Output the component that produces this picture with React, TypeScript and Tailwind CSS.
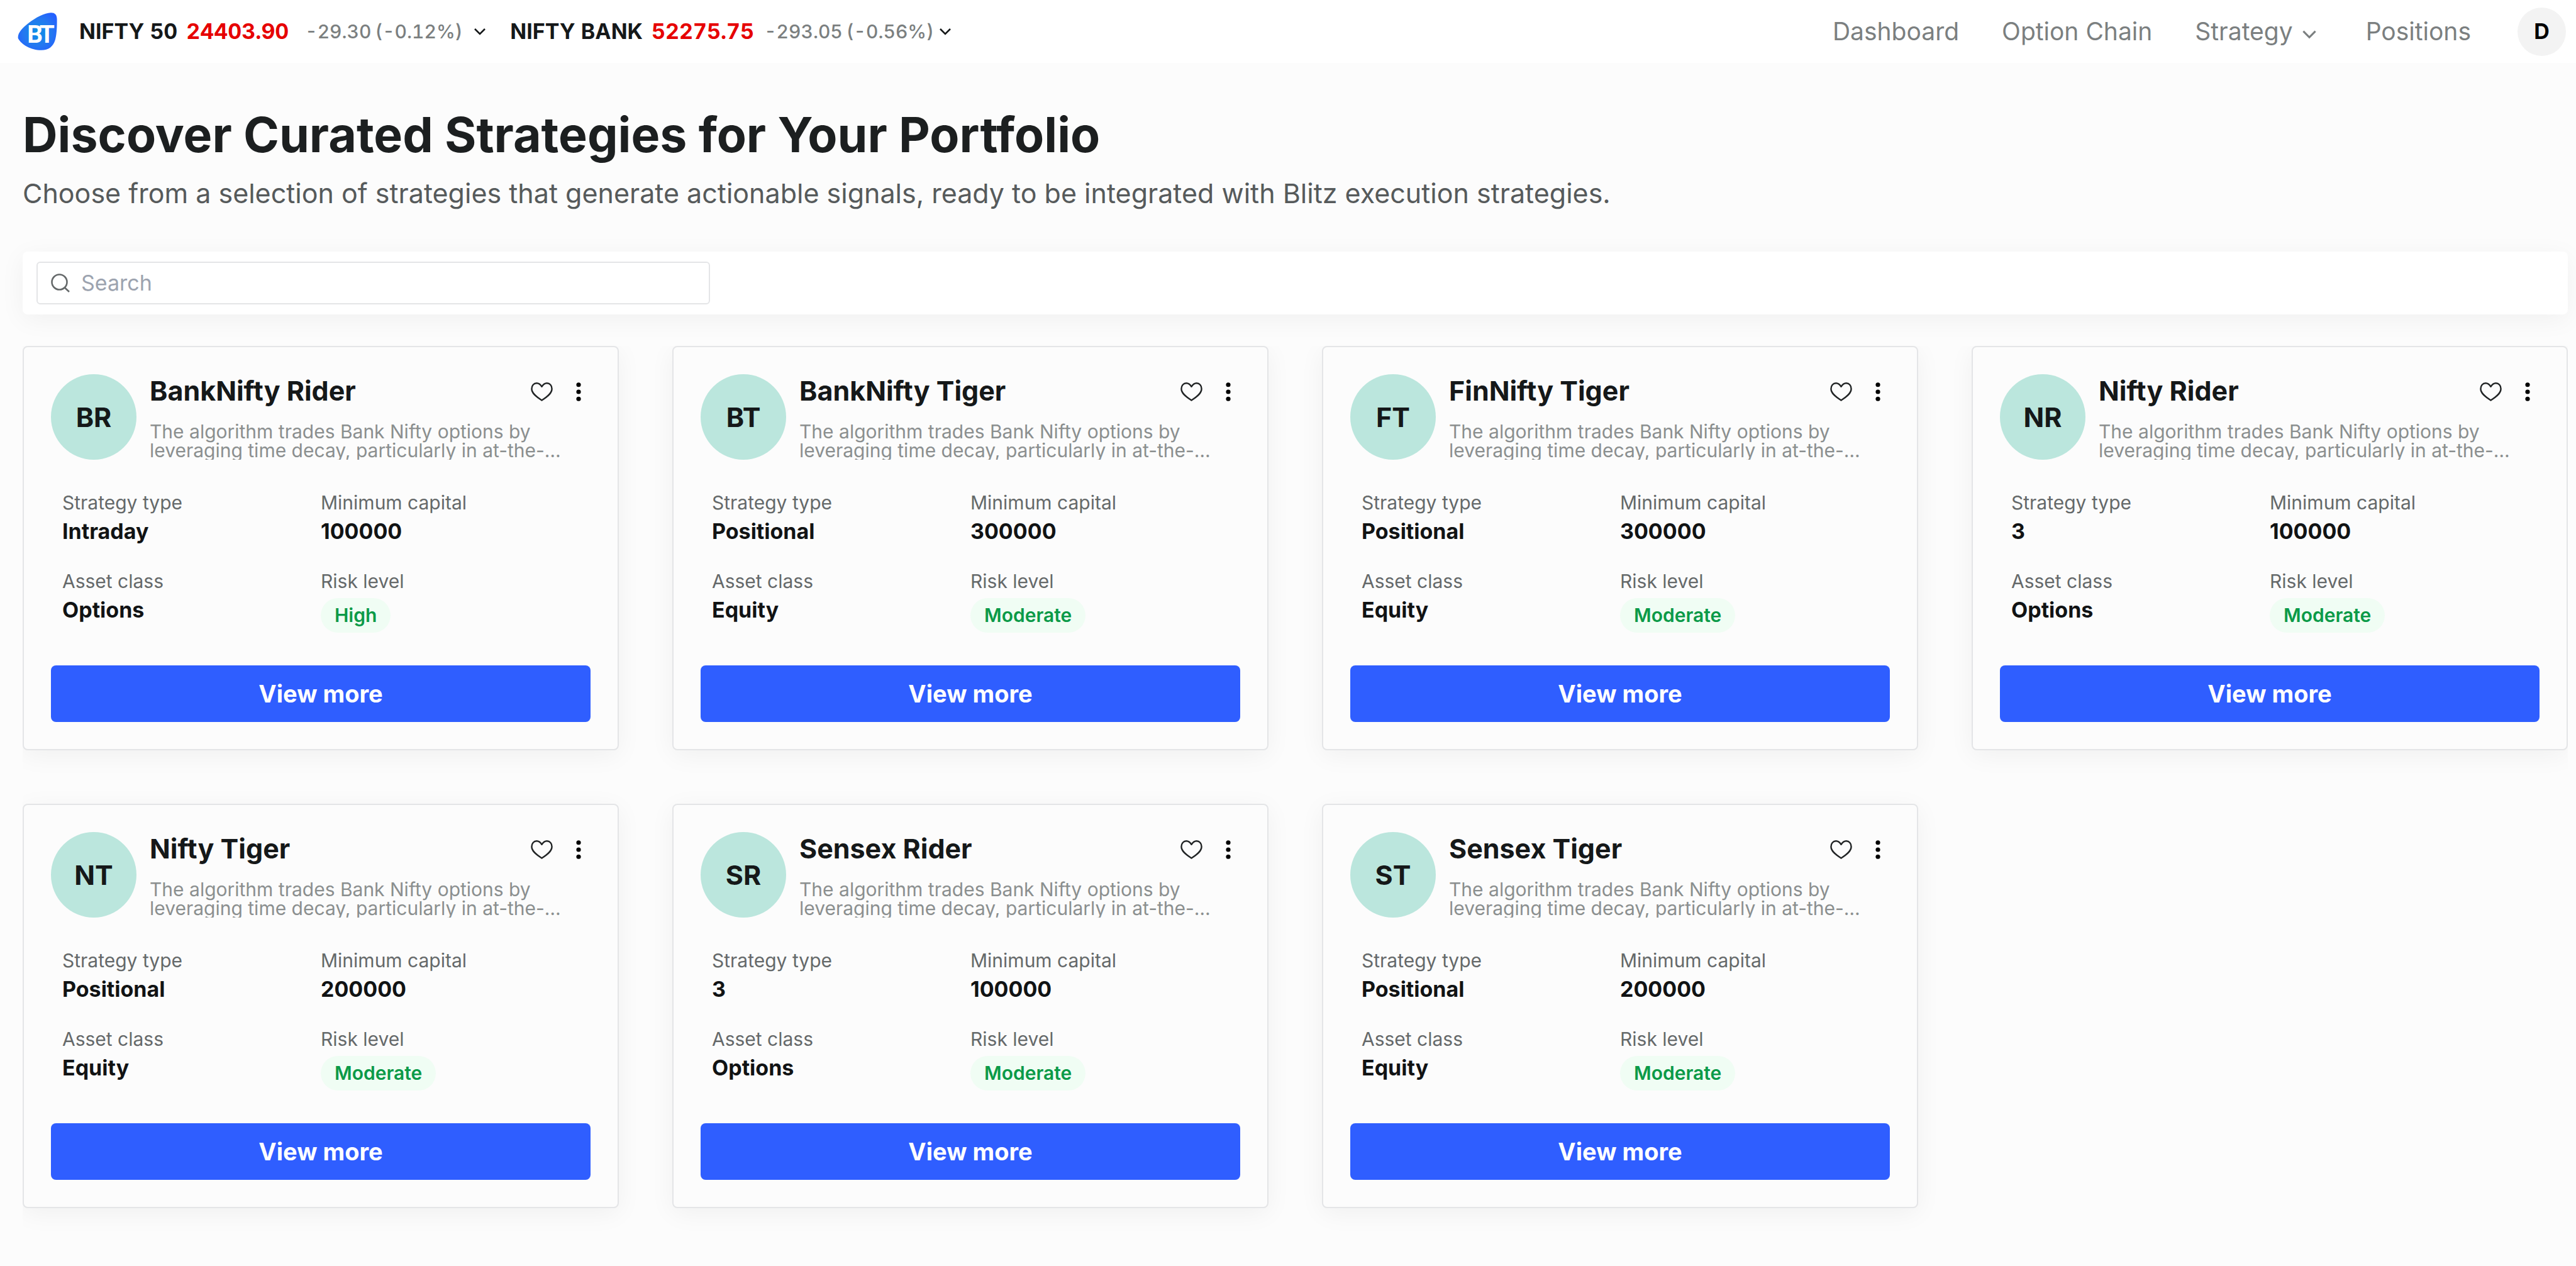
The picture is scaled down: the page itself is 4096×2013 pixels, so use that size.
import { useState } from "react";

type Strategy = {
  initials: string;
  name: string;
  type: string;
  capital: string;
  asset: string;
  risk: string;
};

const strategies: Strategy[] = [
  { initials: "BR", name: "BankNifty Rider", type: "Intraday", capital: "100000", asset: "Options", risk: "High" },
  { initials: "BT", name: "BankNifty Tiger", type: "Positional", capital: "300000", asset: "Equity", risk: "Moderate" },
  { initials: "FT", name: "FinNifty Tiger", type: "Positional", capital: "300000", asset: "Equity", risk: "Moderate" },
  { initials: "NR", name: "Nifty Rider", type: "3", capital: "100000", asset: "Options", risk: "Moderate" },
  { initials: "NT", name: "Nifty Tiger", type: "Positional", capital: "200000", asset: "Equity", risk: "Moderate" },
  { initials: "SR", name: "Sensex Rider", type: "3", capital: "100000", asset: "Options", risk: "Moderate" },
  { initials: "ST", name: "Sensex Tiger", type: "Positional", capital: "200000", asset: "Equity", risk: "Moderate" },
];

function Logo() {
  return (
    <svg viewBox="155 103 354 340" className="h-[60px] w-[63px] shrink-0" role="img" aria-label="BT">
      <defs>
        <radialGradient id="logo-fill" cx="0.5" cy="0.52" r="0.6">
          <stop offset="0" stopColor="#0c92e6" />
          <stop offset="0.6" stopColor="#2478f0" />
          <stop offset="1" stopColor="#2460ff" />
        </radialGradient>
      </defs>
      <path
        fill="url(#logo-fill)"
        d="M452 105C488 103 507 122 508 160C509 230 506 300 492 350C474 412 430 443 365 442C275 440 190 395 158 335C150 290 200 238 250 200C320 145 395 108 452 105Z"
      />
      <text y="375" fontFamily="Roboto, sans-serif" fontWeight="700" fontSize="220" fill="#fff">
        <tspan x="240">B</tspan>
        <tspan x="350">T</tspan>
      </text>
    </svg>
  );
}

function Chevron({ className }: { className: string }) {
  return (
    <svg viewBox="0 0 20 12" fill="none" stroke="currentColor" className={className} aria-hidden="true">
      <path d="M2 2l8 8 8-8" strokeWidth="2.6" />
    </svg>
  );
}

function Ticker({ name, price, change, percent }: { name: string; price: string; change: string; percent: string }) {
  return (
    <button type="button" className="flex items-center whitespace-nowrap text-[34px] leading-[46px] font-bold text-[#151819] tabular-nums">
      <span>{name}</span>
      <span className="ml-3.5 text-[#e60000]">{price}</span>
      <span className="ml-4 flex w-[270px] justify-center gap-1.5 text-[30px] font-medium text-[#7b7f80]">
        <span>{change}</span>
        <span>{percent}</span>
      </span>
      <Chevron className="ml-2 h-3 w-5" />
    </button>
  );
}

function Header() {
  return (
    <header className="flex h-[100px] items-center justify-between bg-white pr-4 pl-7">
      <div className="flex items-center gap-[35px]">
        <Logo />
        <div className="flex items-center gap-[38px]">
          <Ticker name="NIFTY 50" price="24403.90" change="-29.30" percent="(-0.12%)" />
          <Ticker name="NIFTY BANK" price="52275.75" change="-293.05" percent="(-0.56%)" />
        </div>
      </div>
      <nav className="flex items-center gap-[68px] text-[39px] leading-[46px] text-[#7b7f80]">
        <a href="#dashboard">Dashboard</a>
        <a href="#option-chain">Option Chain</a>
        <button type="button" className="flex items-center gap-3.5">
          Strategy
          <Chevron className="mt-2 mr-2.5 h-[15px] w-6" />
        </button>
        <a href="#positions">Positions</a>
        <button type="button" className="ml-1.5 flex size-[77px] items-center justify-center rounded-full bg-[#f3f3f3] text-[34px] font-bold text-black">
          D
        </button>
      </nav>
    </header>
  );
}

function Heart() {
  return (
    <svg viewBox="0 0 66 57" fill="none" stroke="#212425" strokeWidth="4.6" strokeLinejoin="round" className="h-[30px] w-[35px]" aria-hidden="true">
      <path d="M33 54C14 42 2.500 32 2.500 19.500C2.500 9.500 9 2.500 17.500 2.500C24 2.500 29 6.500 33 13C37 6.500 42 2.500 48.500 2.500C57 2.500 63.500 9.500 63.500 19.500C63.500 32 52 42 33 54Z" />
    </svg>
  );
}

function Dots() {
  return (
    <svg viewBox="0 0 16 36" fill="#000" className="h-9 w-4" aria-hidden="true">
      <circle cx="8" cy="6.750" r="3.600" />
      <circle cx="8" cy="18" r="3.600" />
      <circle cx="8" cy="29.250" r="3.600" />
    </svg>
  );
}

function Field({ label, value }: { label: string; value: string }) {
  return (
    <div>
      <dt className="text-[30px] leading-[43px] text-[#65696a]">{label}</dt>
      <dd className="text-[34px] leading-[48px] font-bold text-[#111314]">{value}</dd>
    </div>
  );
}

function Card({ strategy }: { strategy: Strategy }) {
  const [liked, setLiked] = useState(false);
  return (
    <article className="rounded-lg border-2 border-[#e4e5e7] bg-[#fcfcfc] p-[43px] shadow-[0_8px_40px_rgba(0,0,0,0.05)]">
      <div className="flex gap-[21px]">
        <div className="flex size-[136px] shrink-0 items-center justify-center rounded-full bg-[#bbe6dd] text-[43px] leading-[54px] font-bold text-[#151819]">
          {strategy.initials}
        </div>
        <div className="flex min-w-0 flex-1 flex-col justify-between">
          <div className="flex items-center justify-between">
            <h2 className="text-[43px] leading-[52px] font-bold text-[#151819]">{strategy.name}</h2>
            <div className="mt-1 mr-[11px] flex items-center gap-[33px]">
              <button type="button" aria-label="Add to favourites" aria-pressed={liked} onClick={() => setLiked(!liked)}>
                <Heart />
              </button>
              <button type="button" aria-label="More options">
                <Dots />
              </button>
            </div>
          </div>
          <p className="overflow-hidden text-[30px] leading-[30px] text-[#8b8f8f]">
            The algorithm trades Bank Nifty options by leveraging time decay, particularly in at-the-…
          </p>
        </div>
      </div>
      <dl className="mt-[47px] grid grid-cols-2 gap-y-[34px] px-[18px]">
        <Field label="Strategy type" value={strategy.type} />
        <Field label="Minimum capital" value={strategy.capital} />
        <Field label="Asset class" value={strategy.asset} />
        <div>
          <dt className="text-[30px] leading-[43px] text-[#65696a]">Risk level</dt>
          <dd className="mt-[5px] flex">
            <span className="rounded-full bg-[#f0fdf4] px-[22px] text-[30px] leading-[55px] font-semibold text-[#0b9a48]">{strategy.risk}</span>
          </dd>
        </div>
      </dl>
      <button type="button" className="mt-[52px] block h-[90px] w-full rounded-lg bg-[#2f5eff] text-[38px] leading-[46px] font-bold text-white">
        View more
      </button>
    </article>
  );
}

export default function App() {
  return (
    <div className="min-h-screen bg-[#fcfcfc] font-['Inter',sans-serif]">
      <Header />
      <main className="pt-[68px] pr-[13px] pl-9">
        <h1 className="text-[77px] leading-[92px] font-bold text-[#1c1f20]">Discover Curated Strategies for Your Portfolio</h1>
        <p className="mt-[15px] text-[43px] leading-[64px] text-[#565a5b]">
          Choose from a selection of strategies that generate actionable signals, ready to be integrated with Blitz execution strategies.
        </p>
        <div className="mt-[61px] rounded-lg bg-white px-[22px] py-4 shadow-[0_8px_40px_rgba(0,0,0,0.05)]">
          <label className="flex h-[68px] w-[1071px] max-w-full items-center gap-[18px] rounded-md border-2 border-[#e4e5e7] px-[21px]">
            <svg viewBox="0 0 30 30" fill="none" stroke="#65696a" strokeWidth="2.6" className="size-[30px] shrink-0" aria-hidden="true">
              <circle cx="13.500" cy="13.500" r="12" />
              <path d="M21.500 22L29 29" />
            </svg>
            <input
              type="search"
              aria-label="Search"
              placeholder="Search"
              className="min-w-0 flex-1 bg-transparent text-[34px] leading-[46px] outline-none placeholder:text-[#9ca3af]"
            />
          </label>
        </div>
        <section aria-label="Strategies" className="mt-[50px] grid grid-cols-4 gap-[85px] overflow-hidden pb-[85px]">
          {strategies.map((strategy) => (
            <Card key={strategy.name} strategy={strategy} />
          ))}
        </section>
      </main>
    </div>
  );
}
